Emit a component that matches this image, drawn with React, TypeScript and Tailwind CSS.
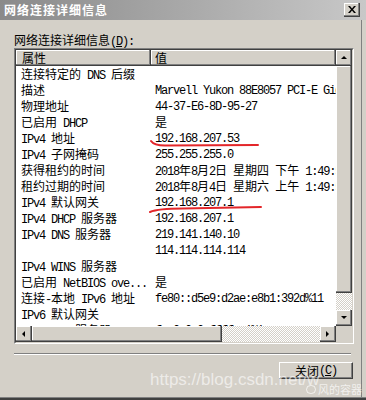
import React from "react";

const CJK = /([\u2E80-\u9FFF\u3000-\u303F\uFF00-\uFFEF]+)/;

// SimSun look: CJK at full width, latin as half-width mono
function Txt({ s }: { s: string }) {
  const parts = s.split(CJK).filter(Boolean);
  return (
    <>
      {parts.map((p, i) =>
        CJK.test(p) ? (
          <span key={i} className="font-['Noto_Sans_CJK_SC',sans-serif]">
            {p}
          </span>
        ) : (
          <span key={i} className="font-['Liberation_Mono',monospace] tracking-[-1.2px]">
            {p}
          </span>
        )
      )}
    </>
  );
}

const rows: [string, string][] = [
  ["连接特定的 DNS 后缀", ""],
  ["描述", "Marvell Yukon 88E8057 PCI-E Gigabit Ethernet Controller"],
  ["物理地址", "44-37-E6-8D-95-27"],
  ["已启用 DHCP", "是"],
  ["IPv4 地址", "192.168.207.53"],
  ["IPv4 子网掩码", "255.255.255.0"],
  ["获得租约的时间", "2018年8月2日 星期四 下午 1:49:54"],
  ["租约过期的时间", "2018年8月4日 星期六 上午 1:49:54"],
  ["IPv4 默认网关", "192.168.207.1"],
  ["IPv4 DHCP 服务器", "192.168.207.1"],
  ["IPv4 DNS 服务器", "219.141.140.10"],
  ["", "114.114.114.114"],
  ["IPv4 WINS 服务器", ""],
  ["已启用 NetBIOS ove...", "是"],
  ["连接-本地 IPv6 地址", "fe80::d5e9:d2ae:e8b1:392d%11"],
  ["IPv6 默认网关", ""],
  ["IPv6 DNS 服务器", "fec0:0:0:ffff::1%1"],
];

const raised =
  "bg-[#d4d0c8] border-r border-b border-[#404040] shadow-[inset_-1px_-1px_#808080,inset_1px_1px_#ffffff]";
const dither =
  "bg-[image:repeating-conic-gradient(#d4d0c8_0%_25%,#ffffff_0%_50%)] bg-[length:2px_2px]";

function Arrow({ dir }: { dir: "up" | "down" | "left" | "right" }) {
  const pts = {
    up: "1,5 4,2 7,5",
    down: "1,2 4,5 7,2",
    left: "5,1 2,4 5,7",
    right: "2,1 5,4 2,7",
  }[dir];
  return (
    <svg width="8" height="8" viewBox="0 0 8 8">
      <polygon points={pts} fill="#000" />
    </svg>
  );
}

export default function App() {
  return (
    <div className="relative w-[366px] h-[400px] bg-[#d4d0c8] flex flex-col overflow-hidden text-[12px] text-black leading-[16px]">
      {/* title bar */}
      <div className="h-[20px] shrink-0 flex items-center justify-between pl-[4px] pr-[6px] bg-linear-to-r from-[#8a8a8a] to-[#c8c8c8]">
        <span className="text-white font-bold font-['Noto_Sans_CJK_SC',sans-serif] tracking-[1px]">
          网络连接详细信息
        </span>
        <div className={`${raised} w-[16px] h-[14px] flex items-center justify-center`}>
          <svg width="8" height="7" viewBox="0 0 8 7">
            <path d="M0 0h2l2 2.5L6 0h2L5 3.5 8 7H6L4 4.5 2 7H0l3-3.5z" fill="#000" />
          </svg>
        </div>
      </div>

      <div className="flex-1 flex flex-col pl-[14px] border-r border-[#808080] mr-[4px]">
        <div className="mt-[12px] h-[16px] whitespace-pre">
          <Txt s="网络连接详细信息(" />
          <span className="underline font-['Liberation_Mono',monospace] tracking-[-1.2px]">D</span>
          <Txt s="):" />
        </div>

        {/* list view */}
        <div className="w-[340px] h-[296px] border border-t-[#808080] border-l-[#808080] border-r-white border-b-white">
          <div className="w-full h-full border border-t-[#404040] border-l-[#404040] border-r-[#d4d0c8] border-b-[#d4d0c8] flex flex-col bg-white">
            <div className="flex h-[276px]">
              <div className="w-[320px] flex flex-col overflow-hidden">
                <div className="flex h-[16px] shrink-0">
                  <div className={`${raised} w-[135px] pl-[6px] whitespace-pre`}>
                    <Txt s="属性" />
                  </div>
                  <div className={`${raised} flex-1 pl-[4px] whitespace-pre`}>
                    <Txt s="值" />
                  </div>
                </div>
                {rows.map(([k, v], i) => (
                  <div key={i} className="flex h-[16px] shrink-0 whitespace-pre">
                    <div className="w-[135px] pl-[5px] overflow-hidden">
                      <Txt s={k} />
                    </div>
                    <div className="flex-1 pl-[4px] overflow-hidden">
                      <Txt s={v} />
                    </div>
                  </div>
                ))}
              </div>
              {/* vertical scrollbar */}
              <div className={`w-[16px] flex flex-col ${dither}`}>
                <div className={`${raised} h-[16px] flex items-center justify-center`}>
                  <Arrow dir="up" />
                </div>
                <div className={`${raised} h-[227px]`} />
                <div className="flex-1" />
                <div className={`${raised} h-[16px] flex items-center justify-center`}>
                  <Arrow dir="down" />
                </div>
              </div>
            </div>
            {/* horizontal scrollbar */}
            <div className="flex h-[16px]">
              <div className={`w-[320px] flex ${dither}`}>
                <div className={`${raised} w-[16px] flex items-center justify-center`}>
                  <Arrow dir="left" />
                </div>
                <div className={`${raised} w-[190px]`} />
                <div className="flex-1" />
                <div className={`${raised} w-[16px] flex items-center justify-center`}>
                  <Arrow dir="right" />
                </div>
              </div>
              <div className="w-[16px] bg-[#d4d0c8]" />
            </div>
          </div>
        </div>

        {/* separator */}
        <div className="mt-[9px] w-[337px] border-t border-b border-t-[#808080] border-b-white" />

        <div className="mt-[7px] flex justify-end pr-[8px]">
          <div className="w-[74px] h-[17px] border border-t-white border-l-white border-r-[#404040] border-b-[#404040] shadow-[inset_-1px_-1px_#808080] flex items-center justify-center whitespace-pre">
            <Txt s="关闭(" />
            <span className="underline font-['Liberation_Mono',monospace] tracking-[-1.2px]">C</span>
            <Txt s=")" />
          </div>
        </div>
      </div>
      <div className="h-[3px] shrink-0 border-t border-[#808080] bg-[#404040]" />

      {/* hand-drawn red underlines */}
      <svg className="absolute left-0 top-0 pointer-events-none" width="366" height="400">
        <path d="M151 141 Q154 145.5 165 145.5 L258 145" stroke="#e3262a" strokeWidth="2" fill="none" strokeLinecap="round" />
        <path d="M150 212 Q158 208.5 183 208.5 L261 207" stroke="#e3262a" strokeWidth="2" fill="none" strokeLinecap="round" />
      </svg>

      {/* watermark */}
      <div className="absolute left-[150px] top-[369px] text-[17px] leading-[22px] text-white/60 font-['Liberation_Sans',sans-serif] whitespace-pre pointer-events-none">
        https://blog.csdn.net/w
      </div>
      <div className="absolute left-[306px] top-[383px] flex items-center gap-[2px] text-[11px] leading-[12px] text-white/70 font-['Noto_Sans_CJK_SC',sans-serif] pointer-events-none">
        <span className="w-[10px] h-[9px] rounded-full border border-white/70" />
        风的容器
      </div>
    </div>
  );
}
